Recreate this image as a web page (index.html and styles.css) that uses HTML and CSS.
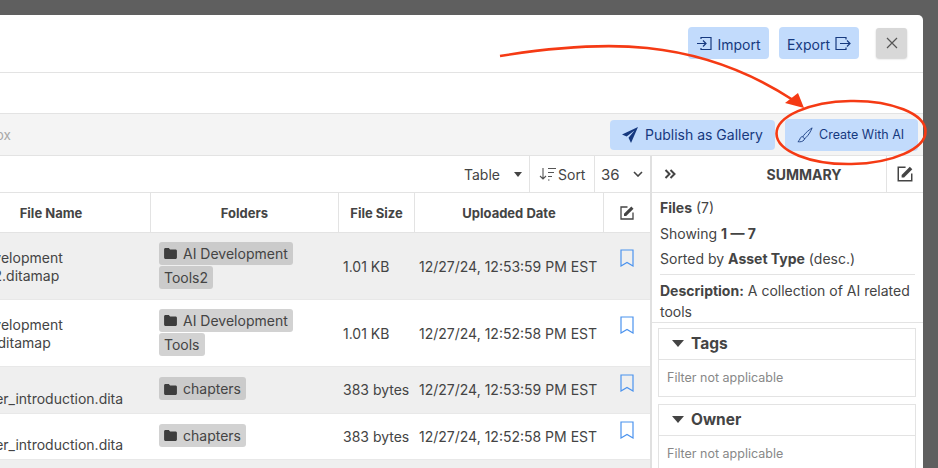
FILE: index.html
```html
<!DOCTYPE html>
<html lang="en">
<head>
<meta charset="utf-8">
<title>Files</title>
<link rel="stylesheet" href="styles.css">
</head>
<body>
<div class="modal">
  <header class="top-bar">
    <button class="btn btn-top"><svg class="ic-16" viewBox="0 0 16 16"><path d="M5 3V1.500h10v12H5V12M1 7.500h9M7 4.500l3 3-3 3"/></svg>Import</button>
    <button class="btn btn-top btn-export">Export<svg class="ic-16" viewBox="0 0 16 16"><path d="M11 3.500v-2H1v12h10v-2M5 7.500h10M12 4.500l3 3-3 3"/></svg></button>
    <button class="close"><svg class="ic-14" viewBox="0 0 14 14"><path d="M2 2l10 10M12 2L2 12"/></svg></button>
  </header>
  <div class="blank-bar"></div>
  <div class="toolbar">
    <span class="crumb">Sandbox</span>
    <div class="toolbar-actions">
      <button class="btn btn-publish"><svg class="ic-fill-16" viewBox="0 0 16 16"><path d="M16 0L0 7.400l4.600 2.100L12.500 3.500 6.500 10.800 9 16z"/></svg>Publish as Gallery</button>
      <button class="btn btn-create"><svg class="ic-brush" viewBox="0 0 18 18"><path d="M17 1C14 3 9.500 6.500 7.500 9.500 6.500 11 6.800 11.800 7.500 12.500 8.300 13.200 9 13 10 12 13 9 15.500 5 17 1ZM6.500 10.500C4.500 11 3.800 12 3.300 13.500 3 14.500 2.300 15.800 1 16.500 3.500 17 6.500 16.500 8 14.500 8.500 13.800 8.600 13 8.500 12.500"/></svg>Create With AI</button>
    </div>
  </div>
  <div class="workspace">
    <section class="main">
      <div class="controls">
        <div class="ctl ctl-view">Table<span class="caret"></span></div>
        <div class="ctl ctl-sort"><svg class="ic-sort" viewBox="0 0 18 16"><path d="M4 2v11M1 10l3 3 3-3M9 2.500h8M9 6.500h6M9 10.500h4M9 14h1.500"/></svg>Sort</div>
        <div class="ctl ctl-count">36<svg class="ic-chev" viewBox="0 0 10 6"><path d="M1 1l4 4 4-4"/></svg></div>
      </div>
      <div class="table">
        <div class="row row-head">
          <div class="cell">File Name</div>
          <div class="cell">Folders</div>
          <div class="cell">File Size</div>
          <div class="cell">Uploaded Date</div>
          <div class="cell"><svg class="ic-edit" viewBox="0 0 16 16"><path class="edit-box" d="M8.500 2H2v12h12V7.500"/><path class="edit-pen" d="M5 11V8.800L12.300 1.500l2.200 2.200L7.200 11z"/></svg></div>
        </div>
        <div class="row row-tall row-alt">
          <div class="cell cell-name">AI Development<br>Tools2.ditamap</div>
          <div class="cell cell-folder"><span class="tag"><svg class="ic-folder" viewBox="0 0 14 12"><path d="M1.500 0h3.700l1.300 1.500h6c.8 0 1.500.7 1.500 1.500v7.300c0 .9-.7 1.700-1.500 1.700h-11C.7 12 0 11.200 0 10.300V1.500C0 .7.700 0 1.500 0z"/></svg>AI Development Tools2</span></div>
          <div class="cell">1.01 KB</div>
          <div class="cell">12/27/24, 12:53:59 PM EST</div>
          <div class="cell cell-mark"><svg class="ic-mark" viewBox="0 0 14 18"><path d="M1 1h12v16l-6-3.500L1 17z"/></svg></div>
        </div>
        <div class="row row-tall">
          <div class="cell cell-name">AI Development<br>Tools.ditamap</div>
          <div class="cell cell-folder"><span class="tag"><svg class="ic-folder" viewBox="0 0 14 12"><path d="M1.500 0h3.700l1.300 1.500h6c.8 0 1.500.7 1.500 1.500v7.300c0 .9-.7 1.700-1.500 1.700h-11C.7 12 0 11.200 0 10.300V1.500C0 .7.700 0 1.500 0z"/></svg>AI Development Tools</span></div>
          <div class="cell">1.01 KB</div>
          <div class="cell">12/27/24, 12:52:58 PM EST</div>
          <div class="cell cell-mark"><svg class="ic-mark" viewBox="0 0 14 18"><path d="M1 1h12v16l-6-3.500L1 17z"/></svg></div>
        </div>
        <div class="row row-short row-alt">
          <div class="cell cell-name">&nbsp;<br>chapter_introduction.dita</div>
          <div class="cell cell-folder"><span class="tag"><svg class="ic-folder" viewBox="0 0 14 12"><path d="M1.500 0h3.700l1.300 1.500h6c.8 0 1.500.7 1.500 1.500v7.300c0 .9-.7 1.700-1.500 1.700h-11C.7 12 0 11.200 0 10.300V1.500C0 .7.700 0 1.500 0z"/></svg>chapters</span></div>
          <div class="cell">383 bytes</div>
          <div class="cell">12/27/24, 12:53:59 PM EST</div>
          <div class="cell cell-mark"><svg class="ic-mark" viewBox="0 0 14 18"><path d="M1 1h12v16l-6-3.500L1 17z"/></svg></div>
        </div>
        <div class="row row-short">
          <div class="cell cell-name">&nbsp;<br>chapter_introduction.dita</div>
          <div class="cell cell-folder"><span class="tag"><svg class="ic-folder" viewBox="0 0 14 12"><path d="M1.500 0h3.700l1.300 1.500h6c.8 0 1.500.7 1.500 1.500v7.300c0 .9-.7 1.700-1.500 1.700h-11C.7 12 0 11.200 0 10.300V1.500C0 .7.700 0 1.500 0z"/></svg>chapters</span></div>
          <div class="cell">383 bytes</div>
          <div class="cell">12/27/24, 12:52:58 PM EST</div>
          <div class="cell cell-mark"><svg class="ic-mark" viewBox="0 0 14 18"><path d="M1 1h12v16l-6-3.500L1 17z"/></svg></div>
        </div>
        <div class="row row-short row-alt"></div>
      </div>
    </section>
    <aside class="side">
      <div class="side-head">
        <svg class="ic-dbl" viewBox="0 0 12 10"><path d="M1.500 1l4 4-4 4M6.500 1l4 4-4 4"/></svg>
        <span class="side-title">SUMMARY</span>
        <span class="side-edit"><svg class="ic-edit ic-edit-lg" viewBox="0 0 16 16"><path class="edit-box" d="M8.500 2H2v12h12V7.500"/><path class="edit-pen" d="M5 11V8.800L12.300 1.500l2.200 2.200L7.200 11z"/></svg></span>
      </div>
      <div class="summary">
        <p class="line"><b>Files</b> (7)</p>
        <p class="line">Showing <b>1 — 7</b></p>
        <p class="line line-sort">Sorted by <b>Asset Type</b> (desc.)</p>
        <p class="desc"><b>Description:</b> A collection of AI related tools</p>
      </div>
      <div class="filters">
        <div class="filter">
          <div class="filter-head"><span class="caret caret-lg"></span>Tags</div>
          <div class="filter-body">Filter not applicable</div>
        </div>
        <div class="filter">
          <div class="filter-head"><span class="caret caret-lg"></span>Owner</div>
          <div class="filter-body">Filter not applicable</div>
        </div>
      </div>
    </aside>
  </div>
</div>
<svg class="annotation" viewBox="0 0 938 468">
  <path class="anno-line" d="M500 56C600 40 695 36 793 100"/>
  <path class="anno-head" d="M804 108L785 103 798 93z"/>
  <ellipse class="anno-line" cx="851" cy="132.500" rx="74.500" ry="31.500" transform="rotate(-1 851 132)"/>
</svg>
</body>
</html>
```
FILE: styles.css
```css
* { box-sizing: border-box; }
html, body { margin: 0; height: 100%; }
body {
  background: #5f5f5f;
  overflow: hidden;
  position: relative;
  font-family: Inter, "Liberation Sans", sans-serif;
  font-size: 14px;
  color: #444;
}
svg { display: block; flex: none; }
button { font: inherit; border: 0; cursor: pointer; }

.modal {
  width: 923px;
  height: 453px;
  margin-top: 15px;
  background: #fff;
  border-top-right-radius: 5px;
  overflow: hidden;
  display: flex;
  flex-direction: column;
}

.top-bar {
  height: 58px;
  flex: none;
  display: flex;
  align-items: center;
  justify-content: flex-end;
  padding: 0 16px 1px 0;
  border-bottom: 1px solid #e3e3e3;
}
.btn {
  display: flex;
  align-items: center;
  background: #c2dbfc;
  color: #16397f;
  border-radius: 4px;
}
.btn-top { height: 32px; width: 81px; justify-content: center; gap: 5px; padding: 2px 0 0; }
.btn-export { width: 80px; margin-left: 10px; }
.close {
  width: 31px;
  height: 30px;
  margin-left: 17px;
  padding: 0;
  display: flex;
  align-items: center;
  justify-content: center;
  background: #d8d8d8;
  border-radius: 3px;
  box-shadow: 0 1px 2px rgba(0, 0, 0, .2);
}
.ic-16 { width: 16px; height: 16px; fill: none; stroke: #16397f; stroke-width: 1.2; }
.ic-14 { width: 14px; height: 14px; fill: none; stroke: #555; stroke-width: 1.2; }

.blank-bar { height: 41px; flex: none; border-bottom: 1px solid #e3e3e3; }

.toolbar {
  height: 42px;
  flex: none;
  display: flex;
  align-items: center;
  justify-content: space-between;
  background: #f4f4f4;
  border-bottom: 1px solid #e3e3e3;
  padding-right: 5px;
}
.crumb { margin-left: -45px; color: #a8a8a8; font-size: 13.500px; }
.toolbar-actions { display: flex; align-items: center; gap: 10px; }
.btn-publish { width: 165px; height: 30px; padding-left: 12px; gap: 7px; }
.btn-create { width: 133px; height: 32px; padding-left: 12px; gap: 6px; font-size: 12.500px; }
.ic-fill-16 { width: 16px; height: 16px; fill: #16397f; }
.ic-brush { width: 16px; height: 16px; fill: none; stroke: #16397f; stroke-width: 1; }

.workspace { flex: 1; display: flex; min-height: 0; }
.main { width: 652px; flex: none; overflow: hidden; border-right: 2px solid #e0e0e0; }

.controls {
  height: 37px;
  display: flex;
  justify-content: flex-end;
  border-bottom: 1px solid #e3e3e3;
}
.ctl { display: flex; align-items: center; height: 100%; }
.ctl-view { width: 66px; gap: 14px; border-right: 1px solid #e3e3e3; }
.ctl-sort { width: 65px; padding-left: 9px; gap: 1px; border-right: 1px solid #e3e3e3; }
.ctl-count { width: 55px; padding-left: 6px; gap: 13px; font-size: 15px; }
.caret {
  width: 0;
  height: 0;
  border-left: 4px solid transparent;
  border-right: 4px solid transparent;
  border-top: 5px solid #444;
}
.caret-lg { border-left-width: 6px; border-right-width: 6px; border-top-width: 7px; }
.ic-sort { width: 18px; height: 16px; fill: none; stroke: #555; stroke-width: 1.1; }
.ic-chev { width: 10px; height: 6px; fill: none; stroke: #444; stroke-width: 1.6; }

.table { margin-left: -48px; }
.row {
  display: grid;
  grid-template-columns: 199px 188px 76px 189px 46px;
  border-bottom: 1px solid #e8e8e8;
}
.row-head { height: 40px; border-bottom: 1px solid #e3e3e3; }
.row-tall { height: 67px; }
.row-short { height: 46.500px; }
.row-alt { background: #efefef; }
.cell { display: flex; align-items: center; padding-left: 4px; white-space: nowrap; }
.row-head .cell {
  justify-content: center;
  padding-left: 0;
  font-size: 13px;
  font-weight: 700;
  border-right: 1px solid #e3e3e3;
}
.row-head .cell:last-child { border-right: 0; }
.cell-name { display: block; align-self: center; padding: 2px 0 0 6px; line-height: 18px; }
.row-short .cell-name { padding-top: 0; }
.cell-folder { display: block; align-self: center; white-space: normal; padding: 0 40px 1px 8px; line-height: 24px; }
.row-short .cell-folder { align-self: flex-start; padding-top: 10px; }
.tag {
  background: #d2d2d2;
  padding: 3px 5px;
  border-radius: 3px;
  -webkit-box-decoration-break: clone;
  box-decoration-break: clone;
}
.row-alt .tag { background: #cbcbcb; }
.ic-folder { display: inline-block; width: 13px; height: 11px; margin-right: 6px; fill: #3d3d3d; vertical-align: -0.500px; }
.cell-mark { justify-content: center; padding-left: 0; align-items: flex-start; padding-top: 16px; }
.row-short .cell-mark { padding-top: 7px; }
.ic-mark { width: 14px; height: 18px; fill: none; stroke: #4b93ee; stroke-width: 1.2; }
.ic-edit { width: 16px; height: 16px; fill: none; }
.ic-edit-lg { width: 18px; height: 18px; }
.edit-box { stroke: #444; stroke-width: 1.3; fill: none; }
.edit-pen { fill: #444; }

.side { flex: 1; min-width: 0; overflow: hidden; }
.side-head {
  height: 37px;
  display: flex;
  align-items: center;
  padding-left: 12px;
  border-bottom: 1px solid #e3e3e3;
}
.ic-dbl { width: 12px; height: 10px; fill: none; stroke: #444; stroke-width: 2; }
.side-title { flex: 1; text-align: center; font-weight: 700; font-size: 14px; padding-left: 46px; }
.side-edit {
  width: 37px;
  height: 100%;
  display: flex;
  align-items: center;
  justify-content: center;
  border-left: 1px solid #e3e3e3;
}
.summary {
  height: 130px;
  padding: 2px 8px 0;
  border-bottom: 1px solid #e3e3e3;
}
.line { margin: 0; line-height: 25.500px; }
.line-sort { padding-bottom: 2px; border-bottom: 1px solid #e3e3e3; }
.desc { margin: 5px 0 0; line-height: 21px; }
.filters { padding: 5px 7px 0 6px; display: flex; flex-direction: column; gap: 7px; }
.filter { border: 1px solid #e3e3e3; }
.filter-head {
  height: 31px;
  display: flex;
  align-items: center;
  gap: 7px;
  padding: 0 0 2px 13px;
  font-size: 15.500px;
  font-weight: 700;
  border-bottom: 1px solid #e3e3e3;
}
.filter-body { height: 36px; display: flex; align-items: center; padding: 0 0 2px 8px; color: #888; font-size: 12.500px; }

.annotation { position: absolute; left: 0; top: 0; width: 938px; height: 468px; pointer-events: none; }
.anno-line { fill: none; stroke: #f53a14; stroke-width: 2.600; }
.anno-head { fill: #f53a14; }
```
